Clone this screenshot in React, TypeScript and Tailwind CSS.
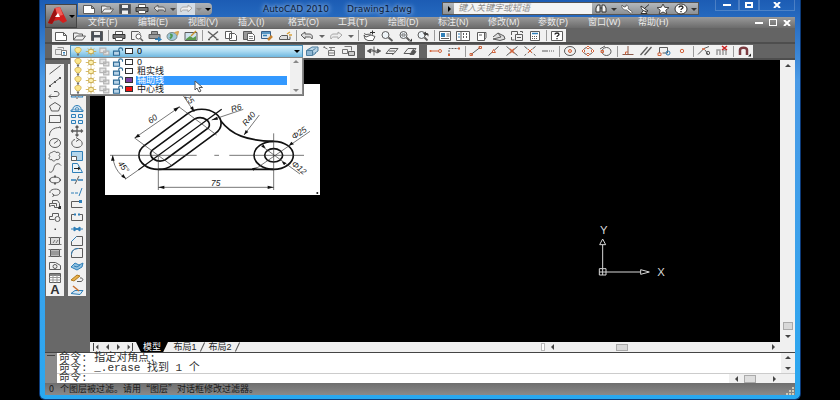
import { useState, type ReactNode } from "react";

const B = "#2f7fb8";
const O = "#d2643c";
const G = "#a8a8a8";

// All toolbar glyphs share a 16x12 box
const GLYPHS: Record<string, ReactNode> = {
  new: <path d="M2.5 2.5h8l3 3v5h-11zM10.5 2.5v3h3" fill="#fff" />,
  open: <path d="M2.5 10V3h4l1 1h4v2M2.5 10l3-4h9l-3 4z" fill="#eee" />,
  save: (
    <>
      <path d="M2.5 1.5h11v9h-11z" fill="#4a5058" />
      <path d="M5 2h6v3H5zM5 7.500h6V11H5z" fill="#eee" stroke="none" />
    </>
  ),
  print: (
    <>
      <path d="M4.500 4V1.500h7V4" fill="#fff" />
      <path d="M2 4.500h12v4H2z" fill="#777" stroke="#333" />
      <path d="M4.500 7.500h7v3h-7z" fill="#fff" />
    </>
  ),
  preview: (
    <>
      <path d="M2.500 9.500v-8h7l2 2M2.500 9.500h3" />
      <circle cx="9.500" cy="6.500" r="2.500" fill="#fff" />
      <path d="M11.500 8.500l2.500 2.500" strokeWidth="1.500" />
    </>
  ),
  publish: (
    <>
      <path d="M4.500 4V1.500h6V4M2 4.500h11v4H2z" fill="#999" />
      <path d="M8 8.500h3V6.500l4 3-4 2.500v-2H8z" fill={B} stroke="none" />
    </>
  ),
  globe: (
    <>
      <ellipse cx="7" cy="6.500" rx="5" ry="4" fill="#9cc6d8" stroke="#7a8a8a" />
      <path d="M5 4.500c3 0 2 2 0 4" stroke="#4f9a55" strokeWidth="2" />
      <path d="M9.500 2.500l4-1-1 4" fill="#e6b85a" stroke="#c89b4a" />
    </>
  ),
  picture: (
    <>
      <path d="M2 2.500h12v8H2z" fill="#cfe3ee" />
      <path d="M3 9l4-3 3 2 3-2v4H3z" fill="#5a9a4e" stroke="none" />
      <path d="M8 6l5-5" stroke="#c8922e" strokeWidth="1.500" />
    </>
  ),
  cut: <path d="M3 1.500l8.500 7M13 1.500l-8.500 7M3 9.500h2M11 9.500h2.500" strokeWidth="1.400" />,
  copy: <path d="M2.500 1.500h6v7h-6zM6.500 3.500h5l2 2v5h-7z" fill="#fff" />,
  paste: (
    <>
      <path d="M2.500 1.500h8v8h-8z" fill="#999" />
      <path d="M6.500 3.500h5l2 2v5h-7z" fill="#fff" />
      <path d="M8 6.500h4M8 8.500h4" stroke="#888" />
    </>
  ),
  pasteBlue: (
    <>
      <path d="M2.500 1.500h9v7h-9z" fill="#dce8f2" stroke="#3a5f86" />
      <path d="M3 3h8M4 5.500h4" stroke={B} strokeWidth="1.500" />
      <path d="M9 10l4-4" stroke="#c8822e" strokeWidth="2.500" />
    </>
  ),
  block: (
    <>
      <path d="M2.500 9.500h8v-4h-6l-2 2zM10 9.500h3v-3" fill="#ddd" />
      <path d="M10 4l3-2M12 5h3" stroke="#d9a13a" strokeWidth="1.500" />
    </>
  ),
  undo: <path d="M2 5l4-3v2h4c3 0 4 2 3 5-1-2-2-2-3-2H6v2z" fill="#ddd" />,
  redo: <path d="M14 5l-4-3v2H6C3 4 2 6 3 9c1-2 2-2 3-2h4v2z" fill="#eee" stroke={G} />,
  pan: (
    <>
      <path d="M3 3.500l2 1 5-.500M3 5l1 4 3 1.500h5l2-4-4-1.500-5 2z" fill="#fff" />
      <path d="M9 2.500h5M11.500 0.500v4" stroke="#333" />
    </>
  ),
  zoom: (
    <>
      <circle cx="6.500" cy="5" r="3.500" fill="#eef4f8" />
      <path d="M9.500 7.500l4 3.500" strokeWidth="1.800" />
    </>
  ),
  zoomWin: (
    <>
      <circle cx="6.500" cy="5" r="3.500" fill="#eef4f8" />
      <path d="M5 4h3v2H5z" stroke="#777" />
      <path d="M9.500 7.500l3 3" strokeWidth="1.800" />
      <path d="M15 8.500v3h-3z" fill="#333" stroke="none" />
    </>
  ),
  zoomPrev: (
    <>
      <circle cx="6.500" cy="5" r="3.500" fill="#eef4f8" />
      <path d="M9.500 7.500l3 3" strokeWidth="1.800" />
      <path d="M8 3.500l3-2v1.500c3 0 3 2 2 4 0-2-1-2-2-2V6z" fill="#444" stroke="none" />
    </>
  ),
  props: (
    <>
      <path d="M2.500 1.500h11v9h-11z" fill="#fff" />
      <path d="M4 3h4v4H4z" fill={B} stroke="none" />
      <path d="M9.500 4h3M9.500 6h3M4 8.500h8" />
    </>
  ),
  center: (
    <>
      <path d="M1.500 1.500h13v9h-13zM6 1.500v9" fill="#fff" />
      <path d="M3 4h2M3 7h2" stroke={B} />
      <path d="M8 4h1M11 4h1M8 7h1M11 7h1" strokeWidth="2" />
    </>
  ),
  palette: <path d="M4.500 2.500h7v8h-7zM10 2.500h3v5l-2 3M6 5h3" fill="#fff" />,
  sheet: <path d="M2 7l5-4 2 1 4 2 1 3-5 1.500-7-1.500 8-2M7 3l3 4" fill="#ddd" />,
  markup: <path d="M2.500 5V1.500h6V4M6.500 4.500h7v6h-7zM2.500 7v3h3M11 1.500h2.500V3M8 7.500h4" />,
  calc: (
    <>
      <path d="M3.500 1.500h9v9h-9z" fill="#fff" />
      <path d="M5 3.500h6" stroke={B} strokeWidth="1.500" />
      <path d="M5 6.500h6M5 8.500h6" strokeDasharray="1 1" />
    </>
  ),
  help: (
    <>
      <path d="M2.500 1.500h11v9h-11z" fill="#fff" />
      <path d="M6 4.500c0-2 4-2 4 0 0 1-2 1-2 2.500M8 8v1.200" stroke="#222" strokeWidth="1.300" />
    </>
  ),
  layers: (
    <>
      <path d="M2.500 4.500h6v5h-6zM4.500 2.500h6v2" fill="#eee" stroke="#999" />
      <path d="M8.500 5.500h5v5h-5z" fill="#fff" stroke="#777" />
      <path d="M10 7.500h2M10 9h2" stroke={B} />
    </>
  ),
  layerA: (
    <>
      <path d="M2.500 5.500l3-2h6v5l-3 2h-6z" fill="#8fb6d2" stroke="#4f7f9f" />
      <path d="M5 4l3-2h6v4l-3 2" fill="#b9d4e6" stroke="#4f7f9f" />
      <path d="M2.500 5.500h6v5M8.500 5.500l3-2" stroke="#4f7f9f" />
    </>
  ),
  layerB: <path d="M1.500 2l4 2M3 1.500l-1.500 1M7 2.500h6M6.500 5.500h6v5h-6zM9 5.500V3M6.500 8h6" stroke="#777" />,
  layerC: (
    <>
      <path d="M4.500 1.500h7v4M2.500 4.500h5v4h-5z" stroke="#777" />
      <path d="M8.500 6.500h6v4h-6z" fill="#ccc" />
    </>
  ),
  ucsA: <path d="M1.500 6h13M8 1.500v9M1.500 6l3-2v4zM14.500 6l-3-2v4zM5 4l6 4" fill="#555" />,
  ucsB: <path d="M2 8.500l4-5h8l-4 5zM5 6h6M8 9.500l2-1" />,
  ucsC: (
    <>
      <path d="M2 8.500l4-5h8l-4 5z" />
      <path d="M8 9.500l3-5 3 2-2 3z" fill="#555" />
    </>
  ),
  track: (
    <>
      <path d="M2 6h8" stroke={O} />
      <circle cx="2.500" cy="6" r="1" fill={O} stroke="none" />
      <circle cx="12" cy="6" r="1.500" stroke={O} />
    </>
  ),
  from: (
    <>
      <path d="M3 10V3.500h9" strokeDasharray="2 1" />
      <path d="M2 9h2v2H2zM12 2.500h2v2h-2z" fill={O} stroke="none" />
    </>
  ),
  endpoint: (
    <>
      <path d="M3 9.500l9-7" />
      <path d="M2 8.500h2.500v2H2zM11 1.500h2.500v2H11z" stroke={O} />
    </>
  ),
  midpoint: (
    <>
      <path d="M2.500 10.500l10-9" />
      <path d="M6 7.500l1.500-3 2 3z" stroke={O} fill="#fff" />
    </>
  ),
  intersect: (
    <>
      <path d="M2.500 1.500l11 9M13.500 1.500l-11 9" />
      <path d="M6 4l4 4M10 4L6 8" stroke={O} strokeWidth="1.500" />
    </>
  ),
  apparent: (
    <>
      <path d="M2.500 1.500l11 9M13.500 1.500l-11 9" strokeDasharray="4 2" />
      <path d="M6 4l4 4M10 4L6 8" stroke={O} />
    </>
  ),
  extension: <path d="M2 6h6M9 6h1M11 6h1M13 6h1" />,
  circleCenter: (
    <>
      <ellipse cx="8" cy="6" rx="5.500" ry="4.500" />
      <circle cx="8" cy="6" r="1.500" stroke={O} fill="#f7d5c8" />
    </>
  ),
  quadrant: (
    <>
      <ellipse cx="8" cy="6" rx="4.500" ry="3.500" />
      <path d="M8 1l1.500 1.500L8 4 6.500 2.500zM8 8l1.500 1.500L8 11 6.500 9.500zM3.500 4.500L5 6 3.500 7.500 2 6zM12.500 4.500L14 6l-1.500 1.500L11 6z" stroke={O} fill="#fff" />
    </>
  ),
  tangent: (
    <>
      <ellipse cx="8.500" cy="6.500" rx="4.500" ry="4" />
      <path d="M2 4l5-3" />
      <path d="M3 5.500h2.500v2H3z" stroke={O} />
    </>
  ),
  perp: (
    <>
      <path d="M8 1v8M2.500 9.500h11" stroke="#8a5a4a" />
      <path d="M5.500 9.500V7H8" stroke={O} />
    </>
  ),
  parallel: <path d="M2.500 10l7-8M6.500 10l7-8" strokeWidth="1.300" />,
  insert: (
    <>
      <path d="M3.500 8V2.500h8V8h-5" />
      <path d="M2 8h3v2.500H2z" stroke={O} />
      <circle cx="12" cy="8" r="2" stroke={B} />
    </>
  ),
  node: <circle cx="8" cy="6" r="1.700" stroke={O} />,
  nearest: (
    <>
      <path d="M2 9.500l6-6 5-2M9 5l3 4" />
      <circle cx="12" cy="8" r="1.700" />
      <path d="M6 4h3" stroke={O} strokeWidth="1.500" />
    </>
  ),
  osnapOff: (
    <>
      <path d="M3 10V5h3v5M9 10V5h3v5" stroke="#999" strokeWidth="1.500" />
      <path d="M8 1l5 4M13 1L8 5" stroke="#c22" strokeWidth="1.500" />
    </>
  ),
  osnap: (
    <>
      <path d="M4 10V5c0-3 7-3 7 0v5" stroke="#7a3b40" strokeWidth="2.500" />
      <path d="M15 8.500v3h-3z" fill="#222" stroke="none" />
    </>
  ),
  line: <path d="M2.500 10l11-8.500" />,
  xline: (
    <>
      <path d="M2.500 10l11-8.500" />
      <path d="M2 9h2v2H2zM12 1h2v2h-2zM7 5h2v2H7z" fill="#555" stroke="none" />
    </>
  ),
  pline: <path d="M2 8.500h7c4 0 4-5 0-5H7M4 6.500l-2 2 2 2" />,
  polygon: <path d="M8 1.500l5.500 3.500-2 5h-7l-2-5z" />,
  rect: <path d="M2.500 2.500h11v7h-11zM1.500 9.500h2M13 1.500v2" />,
  arc: <path d="M2.500 10.500c0-5 4-8 10-8M2 10h1M12 2h1.500v1.500" />,
  circle: (
    <>
      <ellipse cx="8" cy="6" rx="5.500" ry="4.500" />
      <path d="M7 6.500l4-3" />
    </>
  ),
  cloud: <path d="M5 2.500c2-2 4-1 4 0 3-1 5 1 3 3 2 2 0 5-3 4-1 2-4 2-4 0-3 1-4-2-2-3-2-2 0-4 2-4z" />,
  spline: <path d="M2 9.500c2 2 4 0 5-4s5-5 7-2" />,
  ellipse: (
    <>
      <ellipse cx="8" cy="6" rx="5.500" ry="3" />
      <path d="M7 2.500h2M7 9.500h2M2 6h1.500M12.500 6H14" strokeWidth="2" />
    </>
  ),
  ellArc: <path d="M3 7c-1-5 11-5 10-1 0 3-4 4-7 3M5 7.500l2 1.500-1.500 2" />,
  insBlock: (
    <>
      <path d="M2.500 8.500v-3h3v-3h5l2 3v4h-5v-2h-3zM5.500 5.500h4v3" />
      <path d="M12 8h2v3h-3z" fill="#333" stroke="none" />
    </>
  ),
  mkBlock: (
    <>
      <path d="M2.500 8.500v-3h3v-3h6v3M2.500 8.500h5" />
      <circle cx="10.500" cy="8" r="2.500" />
    </>
  ),
  point: <path d="M7.500 5.500h1.500v1.500H7.500z" fill="#444" stroke="none" />,
  hatch: (
    <>
      <path d="M3.500 2.500h9v7h-9z" fill="#ddd" />
      <path d="M1.500 2.500h2M12.500 2.500h2M1.500 9.500h2M12.500 9.500h2M6 8l2-3M9 8l2-3" stroke="#777" />
    </>
  ),
  gradient: (
    <>
      <path d="M3.500 2.500h9v7h-9z" fill="#bbb" />
      <path d="M1.500 2.500h2M12.500 2.500h2M1.500 9.500h2M12.500 9.500h2M4 5h8M4 7h8" stroke="#777" />
    </>
  ),
  region: (
    <>
      <path d="M2.500 9.500v-7h6l5 3v4z" />
      <circle cx="8" cy="6.500" r="2" />
    </>
  ),
  table: (
    <>
      <path d="M2.500 1.500h11v9h-11z" fill="#fff" />
      <path d="M2.500 3h11" strokeWidth="1.500" />
      <path d="M2.500 5.500h11M2.500 8h11M6 3v7.500M10 3v7.500" stroke="#999" />
    </>
  ),
  erase: <path d="M3 9l6-6 4 2-6 5z" fill="#eee" />,
  mirror: (
    <>
      <path d="M7 2v7H2zM9 2v7h5z" fill="#cfe2f0" stroke={B} />
      <path d="M8 0v12" stroke="#555" strokeDasharray="2 1" />
    </>
  ),
  offset: <path d="M2 10.500h12V9h-2c1-6-9-6-8 0H2zM6 9c0-3 4-3 4 0z" stroke={B} fill="#cfe2f0" />,
  array: <path d="M2.500 1.500h4v3h-4zM9.500 1.500h4v3h-4zM2.500 7.500h4v3h-4zM9.500 7.500h4v3h-4z" stroke={B} fill="#e4f0f8" />,
  move: <path d="M8 1v10M2.500 6h11M6.500 2.500L8 1l1.500 1.500M6.500 9.500L8 11l1.500-1.500M4 4.500L2.500 6 4 7.500M12 4.500L13.500 6 12 7.500" strokeWidth="1.300" />,
  rotate: <path d="M6 2.500c-5 1-4 8 2 8s7-6 2-8M7 0.500l3 2-3 2" />,
  scale: (
    <>
      <path d="M2.500 1.500h11v9h-11z" stroke={B} fill="#b4d6ec" />
      <path d="M2.500 6.500h5v4h-5z" fill="#fff" />
    </>
  ),
  stretch: (
    <>
      <path d="M3.500 10.500v-9h5l5 9z" stroke={B} fill="#eaf3f9" />
      <path d="M5 6.500h6M9 5l2 1.500L9 8" stroke="#222" />
    </>
  ),
  trim: (
    <>
      <path d="M2 6h5M9 6h5" stroke={B} strokeWidth="1.300" />
      <path d="M6 10l4-8" />
    </>
  ),
  extend: (
    <>
      <path d="M2 7h7" stroke={B} strokeDasharray="3 1" />
      <path d="M10 10l3-8" stroke={B} />
    </>
  ),
  breakPt: (
    <>
      <path d="M2.500 9.500v-6h9M2.500 9.500h11" />
      <path d="M10 2h3v3h-3z" fill={B} stroke="none" />
    </>
  ),
  breakTwo: (
    <>
      <path d="M6 3.500H2.500v6h11v-6H10" />
      <path d="M5 2.500h2v2H5zM9 2.500h2v2H9z" fill={B} stroke="none" />
    </>
  ),
  join: <path d="M2 6h12M5 4l3 2-3 2zM11 4L8 6l3 2z" stroke={B} fill={B} />,
  chamfer: (
    <>
      <path d="M2.500 10.500v-4l5-5h6v9z" />
      <path d="M2.500 6.500l5-5" stroke={B} />
    </>
  ),
  fillet: (
    <>
      <path d="M2.500 10.500v-3c0-4 3-6 7-6h4v9z" />
      <path d="M2.500 7.500c0-4 3-6 7-6" stroke={B} />
    </>
  ),
  explode: (
    <>
      <path d="M2 7l4-4 4 2 4-2-1 4-5 3z" fill="#8fc0e0" stroke={B} />
      <path d="M5 6l3 1 3-2" stroke={B} />
    </>
  ),
  order: (
    <>
      <path d="M2 8l6-5 3 1-6 5z" fill="#e8b04a" stroke="#b07a20" />
      <path d="M8 9.500h4c3-1 2-4-1-3.500" />
    </>
  ),
  orderB: (
    <>
      <path d="M2 9.500l4-3h8l-3 4z" stroke={B} fill="#d4e6f3" />
      <path d="M4 2l6 5" stroke="#c9702e" strokeWidth="1.500" />
    </>
  ),
  binoculars: <path d="M3 9V5l1.500-3H7v7zM9 9V2h2.500L13 5v4zM7 5h2" fill="#f4f4f4" stroke="#333" />,
  wrench: <path d="M3 2l2 2 2-.500V2c2 0 3 2 2 3.500l4.500 3.500-1.500 1.500L7.500 7C5 7.500 2 5 3 2z" fill="#fff" stroke="#666" />,
  dish: <path d="M4 3c0 4 3 6 7 5zM8 5l4-3.500M6 8l-2 2.500h6L8 8" fill="#fff" stroke="#333" />,
  star: <path d="M8 1l1.700 3.300 4.300.400-3.200 2.500 1 3.800L8 9l-3.800 2 1-3.800L2 4.700l4.300-.400z" fill="#fff" stroke="#444" />,
  question: (
    <>
      <ellipse cx="8" cy="6" rx="6" ry="5" fill="#fff" stroke="#333" />
      <path d="M6 4.500c0-2 4-2 4 0 0 1-2 1-2 2.500M8 8v1.200" stroke="#222" strokeWidth="1.300" />
    </>
  ),
  bulb: (
    <>
      <path d="M8 0.500C4 0.500 3 3.500 4.500 5.500l2 2.500h3l2-2.500C13 3.500 12 0.500 8 0.500z" fill="#fbe58a" stroke="#c9a640" />
      <path d="M6.500 9.500h3M7 11h2" stroke="#666" strokeWidth="1.500" />
    </>
  ),
  sun: (
    <>
      <path d="M8 0.500v11M1 6h14M3.500 2l9 8M12.500 2l-9 8" stroke="#c9a640" />
      <ellipse cx="8" cy="6" rx="3.500" ry="3" fill="#fdf0b0" stroke="#b8962f" />
    </>
  ),
  vp: <path d="M2.500 1.500h8v6h-8zM7.500 5.500h7v5h-7z" fill="#e6e6e6" stroke="#b4b4b4" strokeWidth="1.500" />,
  lock: (
    <>
      <path d="M2 5.500h8v5.500H2z" fill="#b9d4e8" stroke="#2d6a96" strokeWidth="1.500" />
      <path d="M9 5V3c0-2.500 5-2.500 5 0v2" stroke="#2d6a96" strokeWidth="1.500" />
    </>
  ),
};

function Glyph({ name, small = false }: { name: string; small?: boolean }) {
  return (
    <svg
      viewBox="0 0 16 12"
      className={`shrink-0 ${small ? "h-[9px] w-3" : "h-3 w-4"}`}
      fill="none"
      stroke="#5c5c5c"
      strokeWidth="1"
      aria-hidden="true"
    >
      {GLYPHS[name]}
    </svg>
  );
}

function Arrow({ dir, className = "" }: { dir: "up" | "down" | "left" | "right"; className?: string }) {
  const d = {
    up: "M1 5h6L4 2z",
    down: "M1 3h6L4 6z",
    left: "M5 1v6L2 4z",
    right: "M3 1v6l3-3z",
  }[dir];
  return (
    <svg viewBox="0 0 8 8" className={`h-2 w-2 shrink-0 ${className}`} fill="currentColor" aria-hidden="true">
      <path d={d} />
    </svg>
  );
}

// "|" is a separator, "v" is a small drop arrow
function Strip({ items, className = "" }: { items: string[]; className?: string }) {
  return (
    <div className={`flex h-[13px] shrink-0 items-center bg-[#f1f1f1] ${className}`}>
      {items.map((it, i) =>
        it === "|" ? (
          <span key={i} className="flex w-1 justify-center">
            <span className="h-[11px] w-px bg-[#9a9a9a]" />
          </span>
        ) : it === "v" ? (
          <button key={i} type="button" aria-label="more" className="flex w-[11px] justify-center text-[#666]">
            <Arrow dir="down" />
          </button>
        ) : (
          <button key={i} type="button" aria-label={it} className="flex w-[18px] justify-center">
            <Glyph name={it} />
          </button>
        )
      )}
    </div>
  );
}

const STANDARD = [
  "new", "open", "save", "|", "print", "preview", "publish", "globe", "picture", "|",
  "cut", "copy", "paste", "pasteBlue", "block", "|", "undo", "v", "redo", "v", "|",
  "pan", "zoom", "zoomWin", "zoomPrev", "|",
  "props", "center", "palette", "sheet", "markup", "calc", "|", "help",
];
const OSNAP = [
  "track", "from", "|", "endpoint", "midpoint", "intersect", "apparent", "extension", "|",
  "circleCenter", "quadrant", "tangent", "|", "perp", "parallel", "insert", "node", "|",
  "nearest", "osnapOff", "|", "osnap",
];
const DRAW = [
  "line", "xline", "pline", "polygon", "rect", "arc", "circle", "cloud", "spline", "ellipse",
  "ellArc", "insBlock", "mkBlock", "point", "hatch", "gradient", "region", "table",
];
const MODIFY = [
  "erase", "copy", "mirror", "offset", "array", "move", "rotate", "scale", "stretch", "trim",
  "extend", "breakPt", "breakTwo", "join", "chamfer", "fillet", "explode", "order", "orderB",
];
const MENUS = [
  "文件(F)", "编辑(E)", "视图(V)", "插入(I)", "格式(O)", "工具(T)",
  "绘图(D)", "标注(N)", "修改(M)", "参数(P)", "窗口(W)", "帮助(H)",
];
const LAYERS = [
  { name: "0", swatch: "bg-white" },
  { name: "粗实线", swatch: "bg-white" },
  { name: "辅助线", swatch: "bg-[#7a3fa0]" },
  { name: "中心线", swatch: "bg-[#f01010]" },
];

function LayerFlags({ swatch }: { swatch: string }) {
  return (
    <span className="flex shrink-0 items-center">
      <span className="flex w-[14px] justify-center"><Glyph small name="bulb" /></span>
      <span className="flex w-3 justify-center"><Glyph small name="sun" /></span>
      <span className="flex w-[14px] justify-center"><Glyph small name="vp" /></span>
      <span className="flex w-[14px] justify-center"><Glyph small name="lock" /></span>
      <span className={`h-[6px] w-2 border border-[#333] ${swatch}`} />
    </span>
  );
}

function LayerCombo() {
  const [current, setCurrent] = useState("0");
  const [hover, setHover] = useState("辅助线");

  return (
    <div className="relative w-[233px] shrink-0">
      <label className="flex h-[13px] items-center border border-[#4a8fb8] bg-linear-to-b from-[#d6effa] via-[#a9d9f1] to-[#6fb8e0]">
        <LayerFlags swatch="bg-white" />
        <select
          aria-label="图层"
          value={current}
          onChange={(e) => setCurrent(e.target.value)}
          className="h-[11px] min-w-0 flex-1 appearance-none bg-transparent pl-1 text-[9px] leading-[11px] text-black outline-none"
        >
          {LAYERS.map((l) => (
            <option key={l.name}>{l.name}</option>
          ))}
        </select>
        <Arrow dir="down" className="mr-px text-black" />
      </label>

      {/* open layer list */}
      <div className="absolute top-3 left-0 z-20 flex w-full border border-[#8a8a8a] bg-white shadow-[1px_1px_0_#777]">
        <ul role="listbox" aria-label="图层列表" className="flex-1">
          {LAYERS.map((l) => (
            <li
              key={l.name}
              role="option"
              aria-selected={hover === l.name}
              onMouseEnter={() => setHover(l.name)}
              className="flex h-[9px] items-center"
            >
              <LayerFlags swatch={l.swatch} />
              <span
                className={`ml-[3px] mr-[3px] h-[9px] flex-1 pl-px text-[9px] leading-[9px] ${
                  hover === l.name ? "bg-[#3399ff] text-white" : "text-[#222]"
                }`}
              >
                {l.name}
              </span>
            </li>
          ))}
        </ul>
        <div className="flex w-3 flex-col items-center justify-between bg-[#f0f0f0] text-[#888]">
          <Arrow dir="up" />
          <Arrow dir="down" />
        </div>
        <svg viewBox="0 0 10 13" className="absolute top-[22px] left-[123px] h-[13px] w-[10px]" aria-hidden="true">
          <path d="M1 1v9l2-2 2 4 2-1-2-3.500h3.500z" fill="#fff" stroke="#555" />
        </svg>
      </div>
    </div>
  );
}

function PartDrawing() {
  return (
    <svg viewBox="15 12 645 333" className="absolute top-6 left-[15px] h-[111px] w-[215px] bg-white" fill="none" stroke="#111">
      {/* slot */}
      <g strokeWidth="5">
        <path d="M134 196L264 100A58 42 0 0 1 346 160L216 256A58 42 0 0 1 134 196z" />
        <path d="M155 212L285 116A29 21 0 0 1 325 144L195 240A29 21 0 0 1 155 212z" />
        <path d="M115 270L365 88" strokeWidth="4" />
        <path d="M175 268H521" />
        <path d="M362 122C395 165 440 182 521 184" />
        <ellipse cx="521" cy="226" rx="59" ry="42" />
        <ellipse cx="521" cy="226" rx="27" ry="20" />
      </g>
      {/* centre lines and dimensions */}
      <g strokeWidth="2" stroke="#333">
        <path d="M30 226H290M343 226h14M388 226H612" />
        <path d="M521 160V330M175 226V330M175 322H521" />
        <path d="M104 174L240 80M104 174L215 256M236 80L350 165" />
        <path d="M245 40L283 96M335 120L430 88M432 165L478 105" />
        <path d="M465 268L630 154M485 198L600 282" />
        <path d="M115 270L75 298M38 226C40 255 52 280 78 296" />
      </g>
      <g fill="#111" stroke="none">
        <path d="M175 322l18-5v10zM521 322l-18-5v10zM104 174l10-13 7 9zM238 80l-18 6 7 9z" />
        <path d="M283 96l-13-12 9-5zM335 120l16-10 3 9zM432 165l5-15 8 6zM566 197l8-12 8 8zM472 262l-12 10-4-7z" />
        <path d="M38 226l-5 16h11zM78 296l-14-6 6-8zM497 205l-13-5 6-7zM545 244l14 5-7 7z" />
        <circle cx="652" cy="339" r="3" />
      </g>
      <g fill="#222" stroke="none" fontSize="25" fontStyle="italic" textAnchor="middle" className="font-['Liberation_Sans',sans-serif]">
        <text x="347" y="318">75</text>
        <text transform="translate(163 124) rotate(-36)">60</text>
        <text transform="translate(411 92) rotate(-18)">R6</text>
        <text transform="translate(453 122) rotate(-50)">R40</text>
        <text transform="translate(602 166) rotate(-34)">Φ25</text>
        <text transform="translate(592 270) rotate(38)">Φ12</text>
        <text transform="translate(64 266) rotate(52)">45°</text>
        <text transform="translate(262 62) rotate(54)">25</text>
      </g>
    </svg>
  );
}

function UcsIcon() {
  return (
    <svg viewBox="0 0 270 210" className="absolute top-[155px] left-[500px] h-[70px] w-[90px]" fill="none" stroke="#d8d8d8" strokeWidth="3">
      <path d="M38 160V90M38 72l-9 17h18zM48 171h104M178 171l-26-7v14zM28 161h20v19H28zM38 161v19M28 171h20" />
      <g fill="#d8d8d8" stroke="none" fontSize="34" textAnchor="middle" className="font-['Liberation_Sans',sans-serif]">
        <text x="41" y="57">Y</text>
        <text x="213" y="182">X</text>
      </g>
    </svg>
  );
}

function CaptionButtons() {
  const cls = "flex h-[11px] items-center justify-center border-x border-b border-white/20 hover:bg-white/20";
  return (
    <div className="flex self-start text-white">
      <button type="button" aria-label="最小化" className={`${cls} w-6`}>
        <span className="h-[2px] w-2 bg-white" />
      </button>
      <button type="button" aria-label="还原" className={`${cls} w-5`}>
        <span className="h-[6px] w-2 border-2 border-white" />
      </button>
      <button type="button" aria-label="关闭" className={`${cls} w-9`}>
        <svg viewBox="0 0 8 6" className="h-[6px] w-2" stroke="#fff" strokeWidth="2" aria-hidden="true">
          <path d="M1 0l6 6M7 0L1 6" />
        </svg>
      </button>
    </div>
  );
}

function Header() {
  return (
    <header className="flex">
      <button type="button" aria-label="应用程序菜单" className="z-10 mt-1 flex h-6 w-8 shrink-0 items-center border border-[#444] bg-linear-to-b from-[#a4a4a4] to-[#5c5c5c]">
        <svg viewBox="0 0 22 20" className="h-5 w-[22px]" aria-hidden="true">
          <path d="M2 17L9 2l5-1 7 14-4 2-4-3-5 1-2 3z" fill="#d3201f" />
          <path d="M9 2l5-1 3 8-5 1z" fill="#f0605a" />
          <path d="M2 17l7-15 2 7-5 9z" fill="#9c1212" />
          <path d="M9 11l3-4 2 4z" fill="#fff" />
        </svg>
        <Arrow dir="down" className="text-black" />
      </button>
      <div className="min-w-0 flex-1">
        <div className="flex h-[17px] items-center">
          <div className="ml-px flex h-3 w-[134px] shrink-0 items-center rounded-r-sm bg-linear-to-b from-[#b0b4b8] to-[#8c9094] pl-[2px]">
            {["new", "open", "save", "print", "undo"].map((n) => (
              <button key={n} type="button" aria-label={n} className="flex w-[18px] justify-center"><Glyph name={n} /></button>
            ))}
            <Arrow dir="down" className="text-[#444]" />
            <button type="button" aria-label="redo" className="flex h-3 w-[18px] items-center justify-center bg-[#d4dce4]"><Glyph name="redo" /></button>
            <Arrow dir="down" className="text-[#888]" />
            <Arrow dir="down" className="ml-px text-black" />
          </div>
          <h1 className="flex flex-1 gap-[18px] pl-[51px] text-[9px] leading-3 whitespace-nowrap text-[#0c1c38] font-['DejaVu_Sans',sans-serif] [text-shadow:0_0_4px_#a8c8f0,0_0_6px_#a8c8f0]">
            <span>AutoCAD 2010</span>
            <span>Drawing1.dwg</span>
          </h1>
          <div className="mr-4 flex h-[13px] shrink-0 items-center border border-[#555] bg-linear-to-b from-[#b4b8bc] to-[#8c9094]">
            <button type="button" aria-label="展开" className="flex w-[11px] justify-center text-black"><Arrow dir="right" /></button>
            <input
              aria-label="搜索"
              placeholder="键入关键字或短语"
              className="h-[11px] w-[138px] bg-[#f4f4f4] px-1 text-[9px] leading-[11px] italic outline-none placeholder:text-[#8a8a8a]"
            />
            {["binoculars", "v", "wrench", "dish", "star", "question", "v"].map((n, i) =>
              n === "v" ? (
                <Arrow key={i} dir="down" className="text-[#333]" />
              ) : (
                <button key={i} type="button" aria-label={n} className="flex w-[18px] justify-center"><Glyph name={n} /></button>
              )
            )}
          </div>
          <CaptionButtons />
        </div>
        <div className="flex h-[11px] items-center bg-linear-to-b from-[#9a9a9a] to-[#6c6c6c] pl-[11px]">
          <nav className="flex flex-1 gap-5 text-[9px] leading-[11px] whitespace-nowrap text-[#ececec]">
            {MENUS.map((m) => (
              <button key={m} type="button" className="w-[30px] text-left">{m}</button>
            ))}
          </nav>
          <div className="flex w-10 items-center justify-between pr-1">
            <button type="button" aria-label="最小化图形" className="h-[2px] w-2 bg-white" />
            <button type="button" aria-label="还原图形" className="h-[7px] w-2 border border-white" />
            <button type="button" aria-label="关闭图形">
              <svg viewBox="0 0 8 6" className="h-[6px] w-2" stroke="#fff" strokeWidth="2" aria-hidden="true">
                <path d="M1 0l6 6M7 0L1 6" />
              </svg>
            </button>
          </div>
        </div>
      </div>
    </header>
  );
}

function LayoutTabs() {
  return (
    <div className="flex h-[10px] shrink-0 items-center bg-[#f0f0f0] text-[9px] leading-[10px] text-[#222]">
      <div className="flex w-[46px] items-center justify-between px-[3px] text-[#444]">
        <Arrow dir="left" className="border-l border-[#444]" />
        <Arrow dir="left" />
        <Arrow dir="right" />
        <Arrow dir="right" className="border-r border-[#444]" />
      </div>
      <button type="button" className="h-[10px] w-8 bg-black text-white [clip-path:polygon(0_0,100%_0,85%_100%,15%_100%)]">模型</button>
      <button type="button" className="w-[34px]">布局1</button>
      <span className="h-[10px] w-px rotate-[25deg] bg-[#555]" />
      <button type="button" className="w-[34px]">布局2</button>
      <span className="h-[10px] w-px rotate-[25deg] bg-[#555]" />
      <div className="ml-auto flex w-[36%] items-center text-[#444]">
        <span className="h-2 w-1 border border-[#bbb] bg-white" />
        <Arrow dir="left" className="ml-1" />
        <span className="ml-[23%] h-[7px] w-3 border border-[#aaa] bg-[#d8d8d8]" />
        <Arrow dir="right" className="mr-[18px] ml-auto" />
      </div>
    </div>
  );
}

function CommandLine() {
  return (
    <section className="flex h-[31px] shrink-0 border-t border-[#444] text-[11px] leading-[10px] text-[#333] font-['Liberation_Mono','Noto_Sans_CJK_SC',monospace]">
      <div className="w-3 bg-[#8a8a8a] pt-[2px]">
        <span className="mx-auto block h-px w-2 bg-[#444]" />
      </div>
      <div className="flex min-w-0 flex-1 flex-col bg-white">
        <div className="flex">
          <div className="h-5 flex-1 pl-[2px] whitespace-pre">
            <p>命令: 指定对角点:</p>
            <p>命令: _.erase 找到 1 个</p>
          </div>
          <div className="flex h-5 w-[14px] flex-col items-center justify-between bg-[#f0f0f0] py-px text-[#444]">
            <Arrow dir="up" />
            <Arrow dir="down" />
          </div>
        </div>
        <div className="flex h-[10px] border-t border-[#ccc] leading-[9px]">
          <label htmlFor="cmd" className="pl-[2px]">命令:</label>
          <input id="cmd" className="h-[9px] min-w-0 flex-1 bg-white outline-none" />
          <div className="flex w-[66px] items-center bg-[#f0f0f0] text-[#444]">
            <Arrow dir="left" className="ml-1" />
            <span className="ml-[3px] h-2 w-3 border border-[#aaa] bg-[#dedede]" />
            <Arrow dir="right" className="ml-[14px]" />
          </div>
        </div>
      </div>
    </section>
  );
}

export default function App() {
  return (
    <div className="h-screen bg-black px-[39px] font-['Liberation_Sans','Noto_Sans_CJK_SC',sans-serif]">
      <div className="flex h-full flex-col rounded-b-md border-x border-b border-[#0c3a78] bg-linear-to-b from-[#1c5cb4] via-[#4a9ae6] via-20% to-[#28a8f0] px-[5px] pb-1">
        <Header />

        <div className="bg-[#646464] pt-px pl-[7px]">
          <Strip items={STANDARD} className="w-fit" />
        </div>
        <div className="flex h-[18px] items-center border-y-2 border-[#4e4e4e] bg-[#646464] pl-[7px]">
          <div className="flex flex-1 items-center">
            <Strip items={["layers"]} />
            <LayerCombo />
            <Strip items={["layerA", "layerB", "layerC"]} />
            <Strip items={["ucsA", "ucsB", "ucsC"]} className="ml-2" />
            <Strip items={OSNAP} className="ml-2" />
          </div>
        </div>

        <main className="flex min-h-0 flex-1">
          <aside className="flex w-[45px] shrink-0 items-start gap-1 bg-[#686868] pt-1 pl-px">
            <div className="flex h-[232px] w-[18px] flex-col items-center justify-between bg-[#f1f1f1]">
              {DRAW.map((n) => (
                <button key={n} type="button" aria-label={n}><Glyph name={n} /></button>
              ))}
              <button type="button" className="h-3 text-[13px] leading-3 font-bold text-[#333]">A</button>
            </div>
            <div className="flex h-[232px] w-[18px] flex-col items-center justify-between bg-[#f1f1f1]">
              {MODIFY.map((n) => (
                <button key={n} type="button" aria-label={n}><Glyph name={n} /></button>
              ))}
            </div>
          </aside>
          <div className="flex min-w-0 flex-1 flex-col">
            <div className="flex min-h-0 flex-1">
              <div className="relative flex-1 overflow-hidden bg-black">
                <PartDrawing />
                <UcsIcon />
              </div>
              <div className="flex w-[15px] flex-col items-center bg-[#f0f0f0] py-[2px] text-[#444]">
                <Arrow dir="up" />
                <span className="mt-auto mb-[2px] h-2 w-[10px] border border-[#aaa] bg-[#d8d8d8]" />
                <Arrow dir="down" />
              </div>
            </div>
            <LayoutTabs />
          </div>
        </main>

        <CommandLine />
        <footer className="flex h-3 shrink-0 items-center justify-between bg-linear-to-b from-[#6e6e6e] to-[#8a8a8a] pl-1 text-[9px] leading-3 text-[#1a1a1a] font-['Noto_Sans_CJK_SC',sans-serif]">
          <p className="flex gap-[6px]">
            <span>0</span>
            <span>个图层被过滤。请用“图层”对话框修改过滤器。</span>
          </p>
          <svg viewBox="0 0 10 8" className="mt-1 h-2 w-[10px]" fill="#d0ccb8" aria-hidden="true">
            <path d="M7 0h2v2H7zM4 3h2v2H4zM7 3h2v2H7zM1 6h2v2H1zM4 6h2v2H4zM7 6h2v2H7z" />
          </svg>
        </footer>
      </div>
    </div>
  );
}
